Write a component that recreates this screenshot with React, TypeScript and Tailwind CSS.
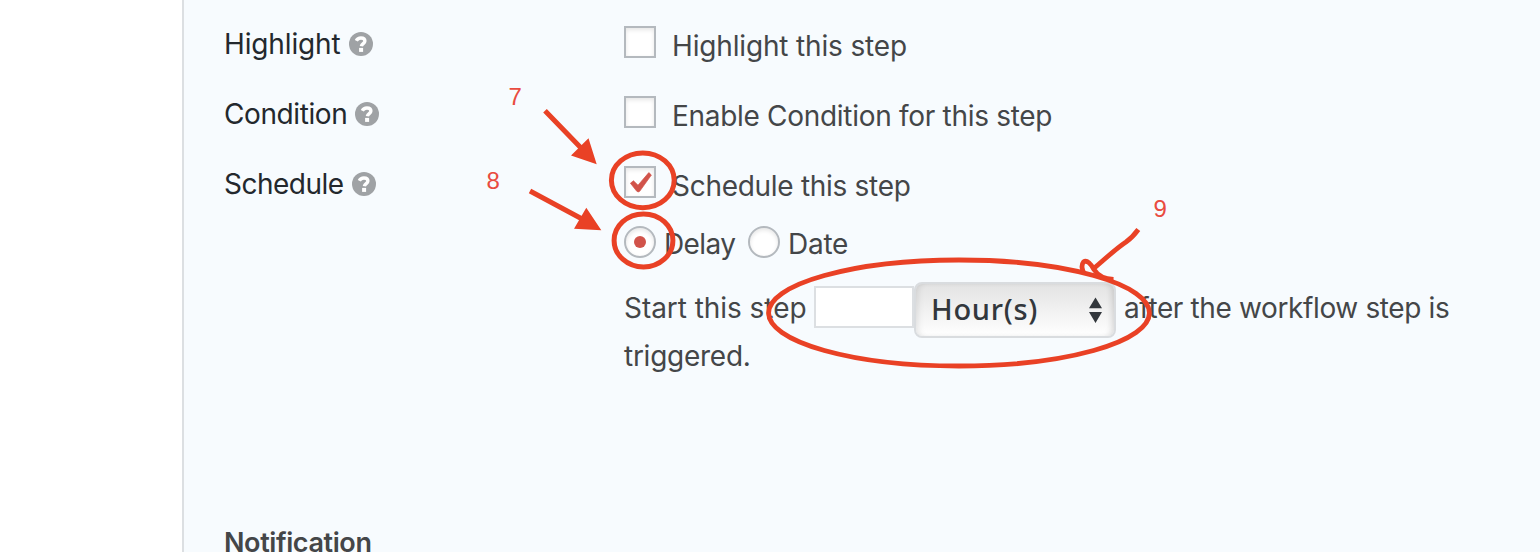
import type { ReactNode } from "react";

function HelpIcon() {
  return (
    <svg className="mt-2 size-6 shrink-0" viewBox="0 0 24 24">
      <circle cx="12" cy="12" r="12" fill="#9fa2a5" />
      <path d="M7.3 8.8c.9-1.8 2.4-2.8 4.6-2.8 2.4 0 4 1.2 4 3 0 2.5-3.1 2.6-3.5 5.2" fill="none" stroke="#fff" strokeWidth="3.4" />
      <rect x="10.1" y="15.9" width="4" height="4" fill="#fff" />
    </svg>
  );
}

function Checkbox({ checked = false }: { checked?: boolean }) {
  return (
    <span className="block size-8 shrink-0 border-2 border-[#b4b9be] bg-white shadow-[inset_0_2px_4px_rgba(0,0,0,0.1)]">
      {checked && (
        <svg className="size-7" viewBox="0 0 28 28">
          <path d="M4.4 15.2 7.5 12.8 12 17.2 22.8 4.6 25.4 7 13.7 23.3Q12.2 24.5 10.8 23.3Z" fill="#d1534a" stroke="#d1534a" strokeWidth="0.7" strokeLinejoin="round" />
        </svg>
      )}
    </span>
  );
}

function Radio({ checked = false }: { checked?: boolean }) {
  return (
    <span className="flex size-8 shrink-0 items-center justify-center rounded-full border-2 border-[#b4b9be] bg-white shadow-[inset_0_2px_4px_rgba(0,0,0,0.1)]">
      {checked && <span className="size-3 rounded-full bg-[#d1534a]" />}
    </span>
  );
}

function Row({ label, labelClass, children }: { label: string; labelClass: string; children: ReactNode }) {
  return (
    <div className="flex h-[70px] shrink-0 items-start">
      <div className="flex w-[400px] shrink-0 gap-2 text-[#23282d]">
        <span className={labelClass}>{label}</span>
        <HelpIcon />
      </div>
      <div className="flex items-start gap-4 pt-[2px]">{children}</div>
    </div>
  );
}

function Annotations() {
  return (
    <svg className="pointer-events-none absolute inset-0 h-[552px] w-[1540px]" viewBox="0 0 1540 552" fill="none" stroke="#e94125" strokeWidth="5">
      <ellipse cx="642.8" cy="180.3" rx="31.4" ry="27.4" />
      <ellipse cx="643.5" cy="240.4" rx="29.4" ry="26.5" />
      <ellipse cx="959" cy="313" rx="190.4" ry="53" strokeWidth="4.8" />
      <path d="M545 110.7 583 150M530 191 584 220" />
      <path d="M596.7 164.3 588.5 138.3 571 155.6ZM601.3 230.2 586.3 207.7 574 228.7Z" fill="#e94125" stroke="none" />
      <path d="M1138.3 229.5C1135 234 1131 238.5 1126 242C1114 250 1103 261 1092 270M1113.5 279.5C1104 279 1098 276 1094 269.5C1091 264 1087 259.5 1083.5 262C1081 265 1082 270 1084 273" strokeWidth="4.8" />
      <g fill="#e94b40" stroke="none" fontFamily="Liberation Sans, sans-serif" fontSize="24">
        <text x="508.5" y="105">7</text>
        <text x="486.5" y="189">8</text>
        <text x="1153.5" y="217">9</text>
      </g>
    </svg>
  );
}

export default function App() {
  return (
    <div className="relative flex h-[552px] w-[1540px] overflow-hidden bg-white font-['Inter',sans-serif] text-[28px] leading-10 tracking-[-0.26px] text-[#444648]">
      <main className="ml-[182px] flex flex-1 flex-col border-l-2 border-[#dcdfe2] bg-[#f7fbfe] pt-6 pl-10">
        <Row label="Highlight" labelClass="tracking-[-0.14px]">
          <Checkbox />
          <span className="tracking-[-0.16px]">Highlight this step</span>
        </Row>
        <Row label="Condition" labelClass="tracking-[-0.4px]">
          <Checkbox />
          <span className="tracking-[-0.3px]">Enable Condition for this step</span>
        </Row>
        <Row label="Schedule" labelClass="tracking-[-0.52px]">
          <Checkbox checked />
          <span className="tracking-[-0.29px]">Schedule this step</span>
        </Row>
        <div className="-mt-2 ml-[400px] flex h-[50px] shrink-0 items-start">
          <Radio checked />
          <span className="-mt-[2px] ml-2 w-[84px] tracking-[-0.6px]">Delay</span>
          <Radio />
          <span className="-mt-[2px] ml-2">Date</span>
        </div>
        <div className="mt-[6px] ml-[400px] flex h-14 shrink-0 items-start whitespace-nowrap">
          <span className="w-[190px] pt-[6px] tracking-[-0.05px]">Start this step</span>
          <span className="mt-1 h-[42px] w-[100px] border-2 border-[#dcdfe2] bg-white" />
          <span className="flex h-14 w-[202px] items-center justify-between rounded-lg border-2 border-[#d9dcdf] bg-linear-to-b from-[#e3e3e3] to-white pr-3 pl-[15px] font-['Noto_Sans',sans-serif] text-[29px] font-medium tracking-[0.7px] text-[#32373c] shadow-[inset_-5px_0_6px_-3px_rgba(0,0,0,0.14),inset_5px_0_6px_-3px_rgba(0,0,0,0.1)]">
            <span className="-mt-[2px]">Hour(s)</span>
            <svg className="h-[26px] w-[13px]" viewBox="0 0 13 26" fill="#32373c">
              <path d="M0 11.3 6.5 0.5 13 11.3ZM0 15H13L6.5 26Z" />
            </svg>
          </span>
          <span className="ml-2 pt-[6px] tracking-[-0.37px]">after the workflow step is</span>
        </div>
        <div className="-mt-[2px] ml-[400px] shrink-0">triggered.</div>
        <h2 className="mt-[147px] shrink-0 text-[27px] font-semibold tracking-[-0.4px]">Notification</h2>
      </main>
      <Annotations />
    </div>
  );
}
